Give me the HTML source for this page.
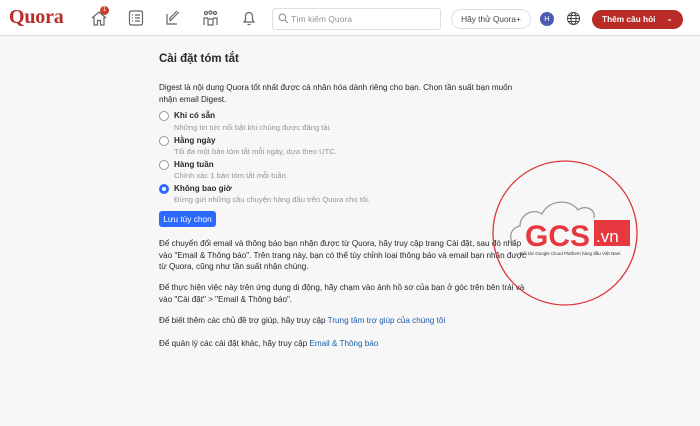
<!DOCTYPE html>
<html><head><meta charset="utf-8"><style>
*{margin:0;padding:0;box-sizing:border-box}
body{width:700px;height:426px;background:#f7f7f8;font-family:"Liberation Sans","Noto Sans CJK SC",sans-serif;color:#282829;position:relative;overflow:hidden;font-size:8.15px}
.hdr{position:absolute;left:0;top:0;width:700px;height:36px;background:#fff;border-bottom:1px solid #dedfe0}
.logo{position:absolute;left:9px;top:6px;font-family:"Liberation Serif",serif;font-weight:bold;font-size:20px;color:#b92b27;letter-spacing:-0.2px}
.ic{position:absolute;top:9px}
.search{position:absolute;left:272px;top:8px;width:169px;height:22px;border:1px solid #dedfe0;border-radius:3px;font-size:8.5px;color:#939598;padding:5px 0 0 18px}
.try{position:absolute;left:451px;top:9px;width:80px;height:20px;border:1px solid #dedfe0;border-radius:10px;font-size:8.3px;color:#444;text-align:center;line-height:18px}
.av{position:absolute;left:540px;top:12px;width:14px;height:14px;border-radius:50%;background:#4a5bb0;color:#fff;font-size:7.5px;text-align:center;line-height:14px}
.ask{position:absolute;left:592px;top:10px;width:91px;height:19px;border-radius:10px;background:#b92b27;color:#fff;font-size:8.3px;font-weight:bold;line-height:19px;padding-left:10px}
.t{position:absolute;left:159px;white-space:nowrap}
.h{font-weight:bold;font-size:11.5px}
.b{font-weight:bold;left:174px}
.s{color:#939598;left:174px;font-size:7.6px}
.r{position:absolute;left:159px;width:10px;height:10px;border-radius:50%;border:1px solid #999;background:#fff}
a{color:#195faa;text-decoration:none}
.btn{position:absolute;left:159px;top:211px;width:57px;height:16px;background:#2e69ff;border-radius:3px;color:#fff;font-size:8.3px;text-align:center;line-height:16px}
</style></head><body>
<div class="hdr">
<div class="logo">Quora</div>
<svg class="ic" style="left:90px" width="18" height="18" viewBox="0 0 18 18" fill="none" stroke="#636466" stroke-width="1.2"><path d="M2 9 L9 3 L16 9 M4 8 V16 H7.5 V11.5 H10.5 V16 H14 V8"/></svg>
<div style="position:absolute;left:100px;top:6px;width:9px;height:9px;border-radius:50%;background:#c7402f;color:#fff;font-size:6px;text-align:center;line-height:9px">1</div>
<svg class="ic" style="left:128px" width="16" height="18" viewBox="0 0 16 18" fill="none" stroke="#636466" stroke-width="1.2"><rect x="1.5" y="2" width="13" height="14" rx="1.5"/><path d="M4 6h1M4 9h1M4 12h1M7 6h5M7 9h5M7 12h5"/></svg>
<svg class="ic" style="left:165px" width="17" height="17" viewBox="0 0 17 17" fill="none" stroke="#636466" stroke-width="1.2"><path d="M2 5V15H12M5 12L14 3M5 12V9L12 2"/></svg>
<svg class="ic" style="left:202px" width="17" height="18" viewBox="0 0 17 18" fill="none" stroke="#636466" stroke-width="1.2"><circle cx="4" cy="4" r="1.5"/><circle cx="8.5" cy="3.5" r="1.5"/><circle cx="13" cy="4" r="1.5"/><path d="M2 16V9h4M15 16V9h-4M6 16v-6h5v6z"/></svg>
<svg class="ic" style="left:241px" width="16" height="18" viewBox="0 0 16 18" fill="none" stroke="#636466" stroke-width="1.2"><path d="M3 13h10l-1.5-2V7a3.5 3.5 0 0 0-7 0v4zM6.5 15.5h3"/></svg>
<div class="search">Tìm kiếm Quora</div>
<svg style="position:absolute;left:278px;top:13px" width="11" height="11" viewBox="0 0 10 10" fill="none" stroke="#939598" stroke-width="1"><circle cx="4" cy="4" r="3"/><path d="M6.2 6.2L9 9"/></svg>
<div class="try">Hãy thử Quora+</div>
<div class="av">H</div>
<svg style="position:absolute;left:566px;top:11px" width="15" height="15" viewBox="0 0 15 15" fill="none" stroke="#444" stroke-width="1"><circle cx="7.5" cy="7.5" r="6"/><ellipse cx="7.5" cy="7.5" rx="2.6" ry="6"/><path d="M1.5 7.5h12M2.5 4.5h10M2.5 10.5h10"/></svg>
<div class="ask">Thêm câu hỏi<span style="position:absolute;left:74px;top:-1px;font-weight:normal">&#8964;</span></div>
</div>
<div class="t h" style="top:53px">Cài đặt tóm tắt</div>
<div class="t" style="top:82px;line-height:11.5px">Digest là nội dung Quora tốt nhất được cá nhân hóa dành riêng cho bạn. Chọn tần suất bạn muốn<br>nhận email Digest.</div>
<div class="r" style="top:111px"></div><div class="t b" style="top:111px">Khi có sẵn</div><div class="t s" style="top:123px">Những tin tức nổi bật khi chúng được đăng tải.</div>
<div class="r" style="top:136px"></div><div class="t b" style="top:136px">Hằng ngày</div><div class="t s" style="top:147px">Tối đa một bản tóm tắt mỗi ngày, dựa theo UTC.</div>
<div class="r" style="top:160px"></div><div class="t b" style="top:160px">Hàng tuần</div><div class="t s" style="top:171px">Chính xác 1 bản tóm tắt mỗi tuần.</div>
<div class="r" style="top:184px;border:3px solid #2e69ff"></div><div class="t b" style="top:184px">Không bao giờ</div><div class="t s" style="top:195px">Đừng gửi những câu chuyện hàng đầu trên Quora cho tôi.</div>
<div class="btn">Lưu tùy chọn</div>
<div class="t" style="top:238px;line-height:11.5px">Để chuyển đổi email và thông báo bạn nhận được từ Quora, hãy truy cập trang Cài đặt, sau đó nhấp<br>vào "Email &amp; Thông báo". Trên trang này, bạn có thể tùy chỉnh loại thông báo và email bạn nhận được<br>từ Quora, cũng như tần suất nhận chúng.</div>
<div class="t" style="top:282px;line-height:11.5px">Để thực hiện việc này trên ứng dụng di động, hãy chạm vào ảnh hồ sơ của bạn ở góc trên bên trái và<br>vào "Cài đặt" &gt; "Email &amp; Thông báo".</div>
<div class="t" style="top:316px">Để biết thêm các chủ đề trợ giúp, hãy truy cập <a>Trung tâm trợ giúp của chúng tôi</a></div>
<div class="t" style="top:339px">Để quản lý các cài đặt khác, hãy truy cập <a>Email &amp; Thông báo</a></div>
<svg style="position:absolute;left:490px;top:156px" width="152" height="154" viewBox="0 0 152 154">
<circle cx="75" cy="77" r="72" fill="none" stroke="#d9373d" stroke-width="1.3"/>
<path d="M28 90 C18 88 18 72 30 70 C30 58 44 52 52 58 C58 44 80 42 88 54 C96 48 106 54 104 62" fill="none" stroke="#999" stroke-width="1.3"/>
<text x="35" y="90" font-family="Liberation Sans,sans-serif" font-weight="bold" font-size="30" fill="#e8383f">GCS</text>
<rect x="104" y="64" width="36" height="26" fill="#e8383f"/>
<text x="106" y="86" font-family="Liberation Sans,sans-serif" font-size="17" fill="#fff">.vn</text>
<text x="30" y="99" font-family="Liberation Sans,sans-serif" font-size="4.5" fill="#333">Đối tác Google Cloud Platform hàng đầu Việt Nam</text>
</svg>
</body></html>
